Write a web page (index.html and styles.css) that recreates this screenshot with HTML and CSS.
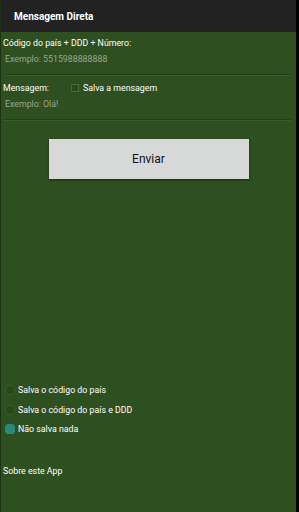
FILE: index.html
```html
<html>

<head>
    <title>Mensagem Direta</title>
    <link rel="stylesheet" href="styles.css">
</head>

<body>
    <div class="screen">
        <div class="app-bar">
            <span class="app-title">Mensagem Direta</span>
        </div>
        <div class="content">
            <div class="field first">
                <span class="label">Código do país + DDD + Número:</span>
                <span class="hint">Exemplo: 5515988888888</span>
            </div>
            <div class="field">
                <div class="label-row">
                    <span class="label">Mensagem:</span>
                    <label class="check"><span class="box"></span>Salva a mensagem</label>
                </div>
                <span class="hint">Exemplo: Olá!</span>
            </div>
            <div class="actions">
                <button type="button" class="send">Enviar</button>
            </div>
            <div class="options">
                <label class="radio"><span class="dot"></span>Salva o código do país</label>
                <label class="radio"><span class="dot"></span>Salva o código do país e DDD</label>
                <label class="radio"><span class="dot checked"></span>Não salva nada</label>
            </div>
            <div class="about">Sobre este App</div>
        </div>
    </div>
</body>

</html>
```

FILE: styles.css
```css
body {
    margin: 0;
    background: #000;
    font-family: Roboto, "Noto Sans", sans-serif;
}

.screen {
    width: 296px;
    height: 512px;
    display: flex;
    flex-direction: column;
    background: #2e4f1f;
    border-left: 1px solid #1c3212;
    box-sizing: border-box;
}

.app-bar {
    height: 32px;
    display: flex;
    align-items: center;
    padding-left: 13px;
    background: #222222;
}

.app-title {
    color: #fff;
    font-size: 10px;
    font-weight: bold;
}

.content {
    display: flex;
    flex-direction: column;
    flex: 1;
    padding: 0 3px 0 2px;
}

.field {
    display: flex;
    flex-direction: column;
    padding: 5px 0 7px;
    border-bottom: 1px solid #22401a;
    box-shadow: 0 1px 0 #3a5c2c;
    margin-right: 2px;
}

.field.first {
    padding-top: 3px;
}

.field .label,
.label-row,
.hint {
    height: 16px;
    line-height: 16px;
}

.label {
    color: #fff;
    font-size: 8.8px;
}

.label-row {
    display: flex;
}

.label-row .label {
    width: 68px;
}

.check {
    display: flex;
    align-items: center;
    color: #fff;
    font-size: 8.8px;
}

.box {
    width: 6px;
    height: 6px;
    margin-right: 4px;
    border: 1px solid #4a6a3c;
    background: #2a4a1c;
}

.hint {
    padding-left: 2px;
    color: #9aa597;
    font-size: 8.8px;
}

.actions {
    display: flex;
    justify-content: center;
    padding: 19px 0 0 1px;
}

.send {
    width: 200px;
    height: 40px;
    border: none;
    padding: 0;
    background: #d7d9d9;
    color: #111;
    font-family: Roboto, "Noto Sans", sans-serif;
    font-size: 12px;
    box-shadow: 0 1px 2px #1a2e10;
}

.options {
    display: flex;
    flex-direction: column;
    margin-top: auto;
}

.radio {
    display: flex;
    align-items: center;
    height: 19.5px;
    color: #fff;
    font-size: 8.8px;
}

.dot {
    width: 8px;
    height: 8px;
    margin: 0 3px 0 2px;
    border-radius: 50%;
    background: #284818;
    border: 1px solid #3c5e2e;
}

.dot.checked {
    background: #2a8a78;
    border-color: #2a8a78;
    border-radius: 3px;
}

.about {
    height: 16px;
    line-height: 16px;
    padding: 24px 0 33px;
    color: #fff;
    font-size: 8.8px;
}
```
